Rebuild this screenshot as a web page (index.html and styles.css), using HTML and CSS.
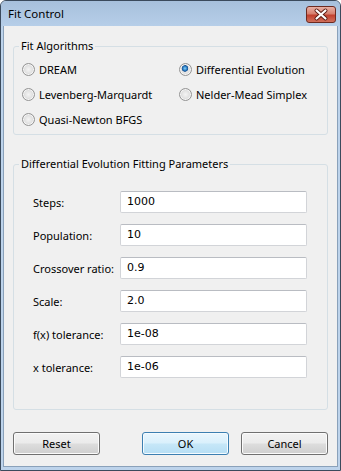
FILE: index.html
```html
<!DOCTYPE html>
<html>
<head>
<meta charset="utf-8">
<title>Fit Control</title>
<link rel="stylesheet" href="styles.css">
</head>
<body>
<div class="window">
  <div class="titlebar">
    <span class="title">Fit Control</span>
    <span class="close">
      <svg width="30" height="17" viewBox="0 0 30 17">
        <path d="M10.5 4.5 L19.5 12.5 M19.5 4.5 L10.5 12.5" stroke="#5a1a12" stroke-width="4" stroke-linecap="round"/>
        <path d="M10.5 4.5 L19.5 12.5 M19.5 4.5 L10.5 12.5" stroke="#fff" stroke-width="2.2" stroke-linecap="round"/>
      </svg>
    </span>
  </div>
  <div class="client">
    <fieldset class="group">
      <legend>Fit Algorithms</legend>
      <div class="radios">
        <label class="radio"><span class="dot"></span>DREAM</label>
        <label class="radio checked"><span class="dot"></span>Differential Evolution</label>
        <label class="radio"><span class="dot"></span>Levenberg-Marquardt</label>
        <label class="radio"><span class="dot"></span>Nelder-Mead Simplex</label>
        <label class="radio"><span class="dot"></span>Quasi-Newton BFGS</label>
      </div>
    </fieldset>
    <fieldset class="group params">
      <legend>Differential Evolution Fitting Parameters</legend>
      <div class="fields">
        <label>Steps:</label><div class="input">1000</div>
        <label>Population:</label><div class="input">10</div>
        <label>Crossover ratio:</label><div class="input">0.9</div>
        <label>Scale:</label><div class="input">2.0</div>
        <label>f(x) tolerance:</label><div class="input">1e-08</div>
        <label>x tolerance:</label><div class="input">1e-06</div>
      </div>
    </fieldset>
    <div class="buttons">
      <span class="btn">Reset</span>
      <span class="btn default">OK</span>
      <span class="btn">Cancel</span>
    </div>
  </div>
</div>
</body>
</html>
```

FILE: styles.css
```css
body {
  margin: 0;
  font-family: "Noto Sans", "DejaVu Sans", sans-serif;
  font-size: 11px;
  color: #000;
}
.window {
  width: 341px;
  height: 471px;
  box-sizing: border-box;
  border: 1px solid #3b4a5c;
  border-radius: 6px 6px 0 0;
  background: #bdd3eb;
  display: flex;
  flex-direction: column;
}
.titlebar {
  height: 25px;
  display: flex;
  background: linear-gradient(#a7c0dc, #b6cee8);
  border-radius: 5px 5px 0 0;
}
.title {
  padding: 5px 0 0 7px;
  font-size: 11.5px;
  line-height: 16px;
}
.close {
  margin: 5px 4px 0 auto;
  width: 30px;
  height: 17px;
  box-sizing: border-box;
  border: 1px solid #6d2a20;
  border-radius: 3px;
  background: linear-gradient(#e8b0a4 0%, #d7806f 45%, #c2402e 55%, #d0705c 100%);
  display: flex;
}
.close svg { margin: -1px; }
.client {
  flex: 1;
  margin: 0 2px 3px 2px;
  border: 1px solid #8aa1ba;
  border-top: none;
  background: #f0f0f0;
  padding: 12px 9px 0 9px;
  display: flex;
  flex-direction: column;
}
.group {
  margin: 0;
  min-width: 0;
  padding: 0 0 0 5px;
  border: 1px solid #d5dfe5;
  border-radius: 3px;
}
.group legend {
  padding: 0 2px;
  line-height: 16px;
}
.radios {
  display: grid;
  grid-template-columns: 157px 1fr;
  grid-auto-rows: 25px;
  padding: 3px 0 2px 3px;
}
.radio {
  display: flex;
  align-items: center;
  gap: 4px;
  padding-bottom: 1px;
}
.dot {
  width: 13px;
  height: 13px;
  box-sizing: border-box;
  border-radius: 50%;
  border: 1px solid #949494;
  background: radial-gradient(circle, #f4f4f4 0, #e6e6e6 3px, #d2d2d2 6px);
  box-shadow: inset 0 0 0 1px #f6f6f6;
}
.checked .dot {
  background:
    radial-gradient(circle at 45% 40%, #8fd3f7 0, #2a7fc6 2px, #174f8e 3px, transparent 3.6px),
    radial-gradient(circle, #f4f4f4 0, #e6e6e6 3px, #d2d2d2 6px);
}
.params { margin-top: 21px; }
.fields {
  display: grid;
  grid-template-columns: 87px 187px;
  grid-auto-rows: 22px;
  row-gap: 11px;
  align-items: center;
  padding: 19px 0 31px 14px;
}
.input {
  height: 22px;
  box-sizing: border-box;
  border: 1px solid #d2d4d8;
  border-top-color: #b9bcc2;
  border-radius: 2px;
  background: #fff;
  padding-left: 6px;
  font-family: "DejaVu Sans", sans-serif;
  font-size: 11px;
  line-height: 20px;
}
.buttons {
  display: flex;
  gap: 12px;
  margin-top: 22px;
}
.btn {
  width: 87px;
  height: 23px;
  box-sizing: border-box;
  border: 1px solid #707070;
  border-radius: 3px;
  background: linear-gradient(#f2f2f2 0%, #ebebeb 48%, #dddddd 52%, #cfcfcf 100%);
  box-shadow: inset 0 0 0 1px #fbfbfb;
  text-align: center;
  line-height: 21px;
}
.btn:first-child { margin-right: auto; }
.btn.default {
  border-color: #3c7fb1;
  background: linear-gradient(#eaf6fd 0%, #d9f0fc 48%, #c6e7f8 52%, #b6def4 100%);
  box-shadow: inset 0 0 0 1px #f4fbff;
}
```
